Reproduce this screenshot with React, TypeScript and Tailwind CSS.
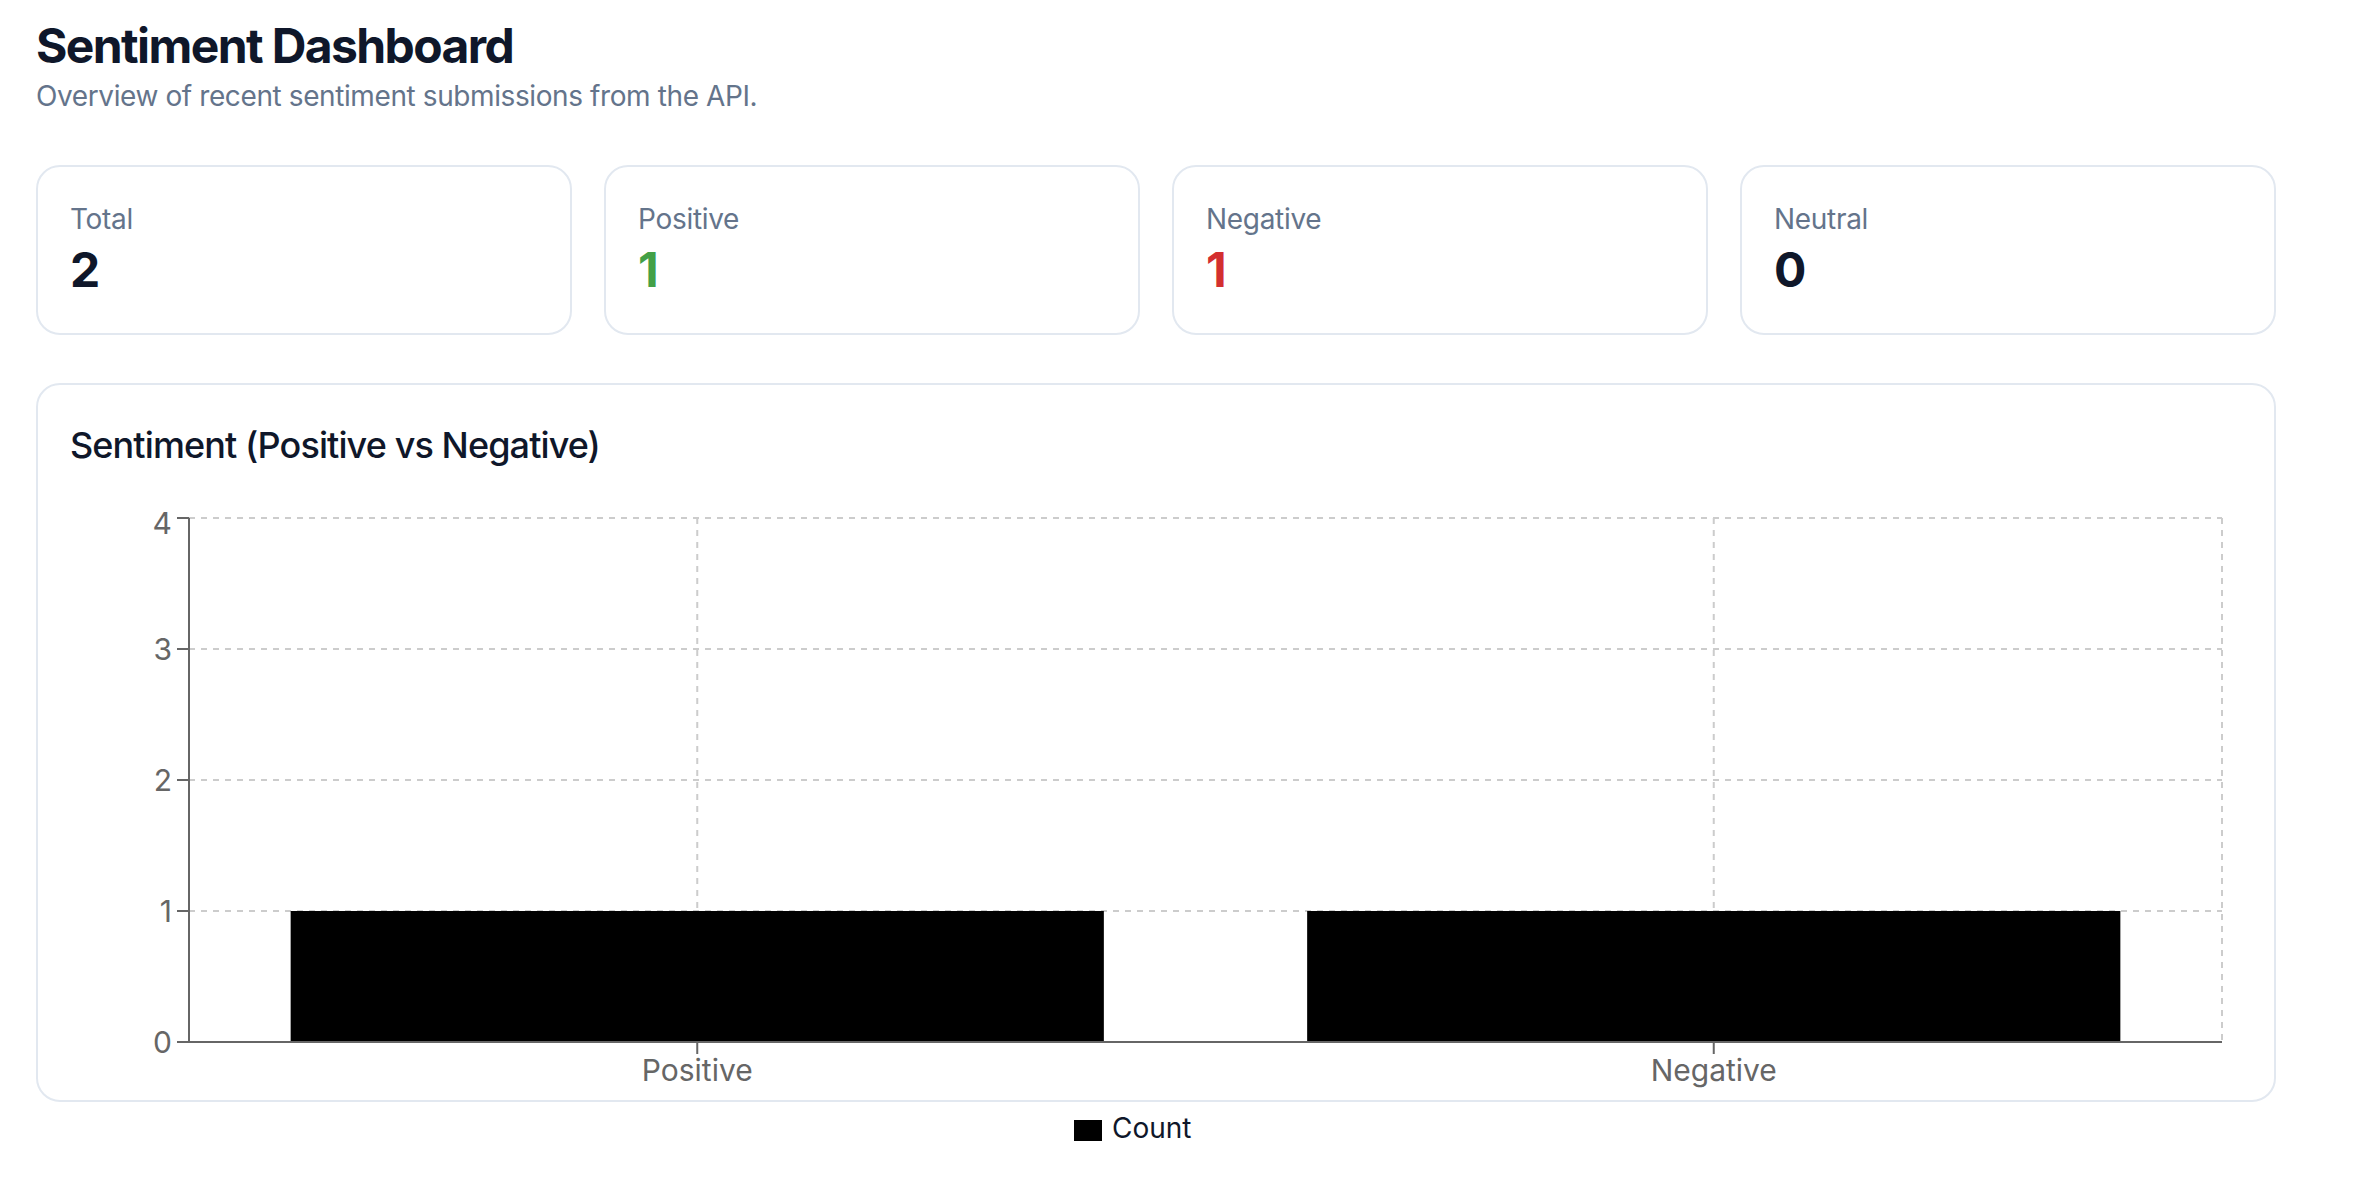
import React from 'react';

interface Stat {
  label: string;
  value: number;
  color: string;
}

const STATS: Stat[] = [
  { label: 'Total', value: 2, color: 'text-[#0f172a]' },
  { label: 'Positive', value: 1, color: 'text-[#43a047]' },
  { label: 'Negative', value: 1, color: 'text-[#d32f2f]' },
  { label: 'Neutral', value: 0, color: 'text-[#0f172a]' },
];

const DATA = [
  { name: 'Positive', count: 1 },
  { name: 'Negative', count: 1 },
];

// chart geometry (svg coords)
const W = 2172;
const H = 623;
const LEFT = 119;
const RIGHT = 2152;
const TOP = 43;
const BOTTOM = 567;
const MAX = 4;

function SentimentChart() {
  const band = (RIGHT - LEFT) / DATA.length;
  const yOf = (v: number) => BOTTOM - ((BOTTOM - TOP) * v) / MAX;
  const ticks = [0, 1, 2, 3, 4];
  const font = 'Inter, "Liberation Sans", sans-serif';

  return (
    <svg width={W} height={H} className="mt-[2px] block overflow-visible">
      {/* grid */}
      <g stroke="#ccc" strokeWidth={2} strokeDasharray="6 6" fill="none">
        {ticks.map((t) => (
          <line key={t} x1={LEFT} x2={RIGHT} y1={yOf(t)} y2={yOf(t)} />
        ))}
        {DATA.map((d, i) => (
          <line key={d.name} x1={LEFT + band * (i + 0.5)} x2={LEFT + band * (i + 0.5)} y1={TOP} y2={BOTTOM} />
        ))}
        <line x1={RIGHT} x2={RIGHT} y1={TOP} y2={BOTTOM} />
      </g>

      {/* bars */}
      {DATA.map((d, i) => (
        <rect
          key={d.name}
          x={LEFT + band * i + band * 0.1}
          y={yOf(d.count)}
          width={band * 0.8}
          height={BOTTOM - yOf(d.count)}
          fill="#000"
        />
      ))}

      {/* y axis */}
      <g stroke="#666" strokeWidth={2}>
        <line x1={LEFT} x2={LEFT} y1={TOP} y2={BOTTOM} />
        {ticks.map((t) => (
          <line key={t} x1={LEFT - 12} x2={LEFT} y1={yOf(t)} y2={yOf(t)} />
        ))}
      </g>
      {ticks.map((t) => (
        <text
          key={t}
          x={102}
          y={yOf(t) + (t === MAX ? 16 : 11)}
          textAnchor="end"
          fill="#666"
          fontSize={30}
          fontFamily={font}
        >
          {t}
        </text>
      ))}

      {/* x axis */}
      <g stroke="#666" strokeWidth={2}>
        <line x1={LEFT} x2={RIGHT} y1={BOTTOM} y2={BOTTOM} />
        {DATA.map((d, i) => (
          <line key={d.name} x1={LEFT + band * (i + 0.5)} x2={LEFT + band * (i + 0.5)} y1={BOTTOM} y2={BOTTOM + 12} />
        ))}
      </g>
      {DATA.map((d, i) => (
        <text
          key={d.name}
          x={LEFT + band * (i + 0.5)}
          y={606}
          textAnchor="middle"
          fill="#666"
          fontSize={30}
          fontFamily={font}
        >
          {d.name}
        </text>
      ))}
    </svg>
  );
}

export default function App() {
  return (
    <div className="min-h-screen bg-white pl-[36px] pt-[16px] font-['Inter','Liberation_Sans',sans-serif]">
      <div className="w-[2240px]">
        {/* Header */}
        <h1 className="text-[48px] leading-[60px] font-bold tracking-[-1.6px] text-[#0f172a]">Sentiment Dashboard</h1>
        <p className="text-[28px] leading-[40px] tracking-[-0.4px] text-[#64748b]">
          Overview of recent sentiment submissions from the API.
        </p>

        {/* Stat cards */}
        <div className="mt-[49px] grid grid-cols-4 gap-[32px]">
          {STATS.map((s) => (
            <div key={s.label} className="rounded-[24px] border-2 border-[#e2e8f0] bg-white p-[32px]">
              <div className="text-[28px] leading-[40px] tracking-[-0.3px] text-[#64748b]">{s.label}</div>
              <div className={`text-[48px] leading-[62px] font-bold ${s.color}`}>{s.value}</div>
            </div>
          ))}
        </div>

        {/* Chart card */}
        <div className="mt-[48px] h-[719px] rounded-[24px] border-2 border-[#e2e8f0] bg-white p-[32px]">
          <h2 className="text-[36px] leading-[56px] font-medium tracking-[-0.9px] text-[#0f172a]">
            Sentiment (Positive vs Negative)
          </h2>
          <SentimentChart />
          <div className="flex items-start pl-[1004px] pt-[10px]">
            <span className="mt-[12px] mr-[10px] h-[21px] w-[28px] bg-black" />
            <span className="text-[28px] leading-[40px] text-[#0f172a]">Count</span>
          </div>
        </div>
      </div>
    </div>
  );
}
